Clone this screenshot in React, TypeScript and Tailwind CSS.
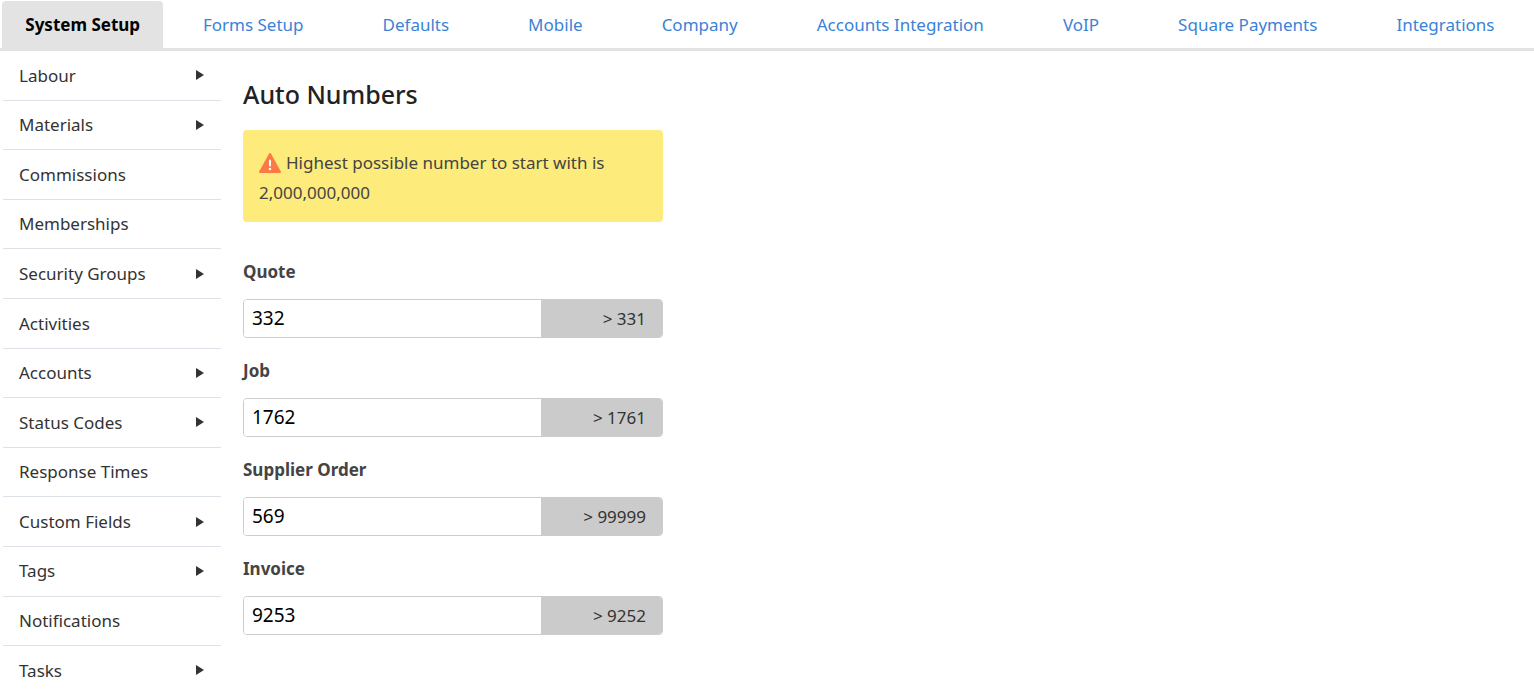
import { ChevronRight } from "lucide-react";

const tabs = ["System Setup", "Forms Setup", "Defaults", "Mobile", "Company", "Accounts Integration", "VoIP", "Square Payments", "Integrations"];

const menu: [string, boolean][] = [
  ["Labour", true],
  ["Materials", true],
  ["Commissions", false],
  ["Memberships", false],
  ["Security Groups", true],
  ["Activities", false],
  ["Accounts", true],
  ["Status Codes", true],
  ["Response Times", false],
  ["Custom Fields", true],
  ["Tags", true],
  ["Notifications", false],
  ["Tasks", true],
];

const numbers = [
  { label: "Quote", value: "332", min: "> 331" },
  { label: "Job", value: "1762", min: "> 1761" },
  { label: "Supplier Order", value: "569", min: "> 99999" },
  { label: "Invoice", value: "9253", min: "> 9252" },
];

export default function App() {
  return (
    <div className="h-[694px] overflow-hidden bg-white font-['Roboto',sans-serif] text-[#333]">
      {/* Tabs */}
      <div className="flex pl-[2px] pt-[1px] border-b-[3px] border-[#e3e3e3] h-[51px] whitespace-nowrap">
        {tabs.map((t, i) => (
          <div
            key={t}
            className={
              i === 0
                ? "h-[47px] w-[183px] flex items-center justify-center bg-[#e3e3e3] rounded-t text-[17px] font-bold text-black"
                : "h-[47px] px-[39.5px] flex items-center text-[17px] text-[#3b82d6]"
            }
          >
            {t}
          </div>
        ))}
      </div>

      <div className="flex">
        {/* Sidebar */}
        <div className="w-[218px] ml-[3px] shrink-0">
          {menu.map(([name, sub]) => (
            <div key={name} className="h-[49.6px] flex items-center justify-between pl-4 pr-4 border-b border-[#dde2e8] text-[17px] text-[#333]">
              <span>{name}</span>
              {sub && (
                <svg width="10" height="12" viewBox="0 0 10 12">
                  <path d="M1 1 L9 6 L1 11 Z" fill="#333" />
                </svg>
              )}
            </div>
          ))}
        </div>

        {/* Content */}
        <div className="ml-[22px] w-[420px]">
          <h1 className="text-[25px] font-medium text-[#222] mt-[27px] leading-8">Auto Numbers</h1>
          <div className="mt-[20px] h-[92px] bg-[#fdeb7b] rounded px-4 pt-[18px] text-[17px] leading-[30px] text-[#444]">
            <div className="flex items-center gap-[5px]">
              <svg width="22" height="20" viewBox="0 0 22 20">
                <path d="M11 1 L21 19 L1 19 Z" fill="#fb7a45" stroke="#fb7a45" strokeWidth="2" strokeLinejoin="round" />
                <rect x="10" y="6.5" width="2" height="7" rx="1" fill="#fff" />
                <circle cx="11" cy="16" r="1.2" fill="#fff" />
              </svg>
              <span>Highest possible number to start with is</span>
            </div>
            <div>2,000,000,000</div>
          </div>

          <div className="mt-[40px] flex flex-col gap-[23px]">
            {numbers.map((n) => (
              <div key={n.label}>
                <div className="text-[17px] font-bold text-[#444] leading-5 h-[20px]">{n.label}</div>
                <div className="mt-[17px] flex h-[39px] rounded border border-[#ccc] overflow-hidden">
                  <div className="flex-1 flex items-center pl-2 text-[19px] text-black bg-white">{n.value}</div>
                  <div className="w-[121px] bg-[#cbcbcb] flex items-center justify-end pr-4 text-[17px] text-[#333]">{n.min}</div>
                </div>
              </div>
            ))}
          </div>
        </div>
      </div>
      <span className="hidden"><ChevronRight /></span>
    </div>
  );
}
